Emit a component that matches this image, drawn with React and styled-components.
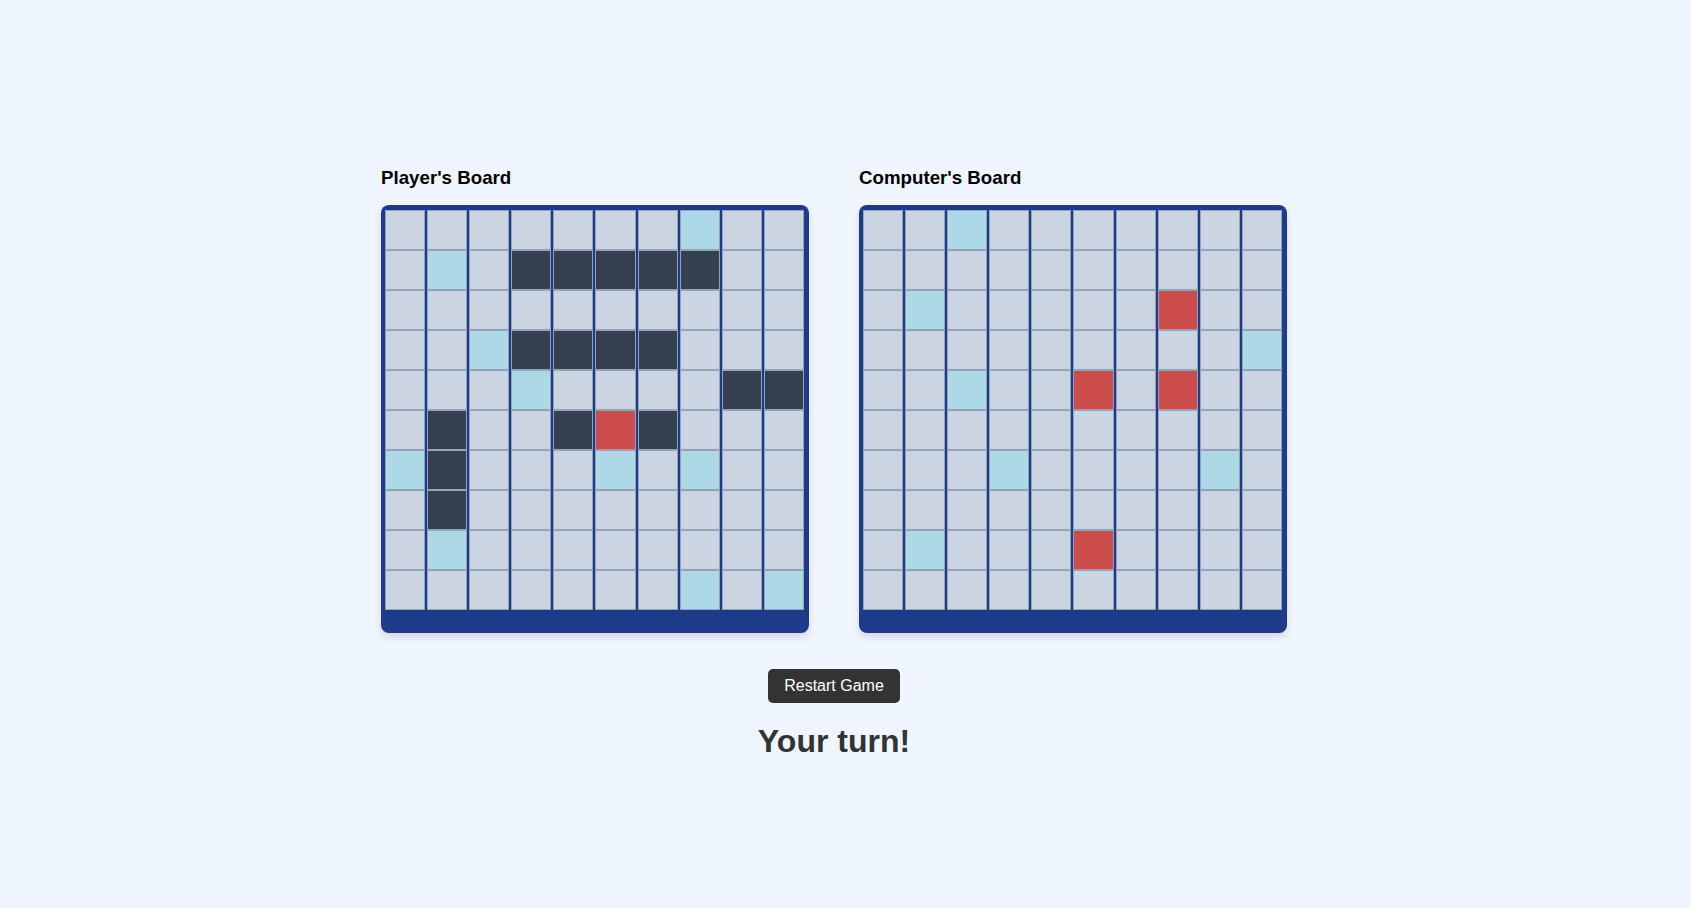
import React, { useState } from 'react';
import styled, { createGlobalStyle } from 'styled-components';

const GlobalStyle = createGlobalStyle`
  body {
    margin: 0;
    background-color: #eff6ff;
    font-family: "Liberation Sans", Arial, sans-serif;
  }
`;

const Page = styled.div`
  align-items: center;
  display: flex;
  flex-direction: column;
  min-height: 100vh;
  padding: 167px 23px 0 0;
  box-sizing: border-box;
`;

const Boards = styled.div`
  display: flex;
  gap: 50px;
`;

const BoardColumn = styled.div`
  display: flex;
  flex-direction: column;
`;

const Title = styled.h3`
  color: #000;
  font-size: 18.72px;
  font-weight: 700;
  line-height: 21px;
  margin: 0 0 17px;
`;

const Grid = styled.div`
  align-content: start;
  background-color: #1e3a8a;
  border-radius: 8px;
  box-shadow: 0 4px 8px rgba(0, 0, 0, 0.12);
  box-sizing: border-box;
  column-gap: 2px;
  display: grid;
  grid-auto-rows: 40px;
  grid-template-columns: repeat(10, 1fr);
  height: 428px;
  padding: 5px 5px 4px 4px;
  width: 428px;
`;

const fills = {
  empty: '#cbd5e1',
  ship: '#343f50',
  miss: '#add8e6',
  hit: '#cc4c4c'
};

const Cell = styled.div`
  background-color: ${({ $state }) => fills[$state]};
  border: 1px solid #94a3b8;
  box-sizing: border-box;
  cursor: ${({ $clickable }) => ($clickable ? 'pointer' : 'default')};
`;

const RestartButton = styled.button`
  background-color: #333;
  border: none;
  border-radius: 5px;
  color: #fff;
  cursor: pointer;
  font-family: "Liberation Sans", Arial, sans-serif;
  font-size: 16px;
  height: 34px;
  margin-top: 36px;
  padding: 0 16px;
`;

const Status = styled.h1`
  color: #333;
  font-size: 32px;
  font-weight: 700;
  margin: 20px 0 0;
`;

// rows of 10: . empty, S ship, o miss, X hit
const playerLayout = [
  '.......o..',
  '.o.SSSSS..',
  '..........',
  '..oSSSS...',
  '...o....SS',
  '.S..SXS...',
  'oS...o.o..',
  '.S........',
  '.o........',
  '.......o.o'
];

const computerLayout = [
  '..o.......',
  '..........',
  '.o.....X..',
  '.........o',
  '..o..X.X..',
  '..........',
  '...o....o.',
  '..........',
  '.o...X....',
  '..........'
];

const codes = { '.': 'empty', S: 'ship', o: 'miss', X: 'hit' };

const parse = (rows) => rows.map((row) => row.split('').map((c) => codes[c]));

const Board = ({ title, cells, onFire }) => <BoardColumn>
  <Title>{title}</Title>
  <Grid>
    {cells.map((row, r) => row.map((state, c) => <Cell
      key={`${r}-${c}`}
      $state={state}
      $clickable={!!onFire}
      onClick={onFire ? () => onFire(r, c) : undefined}
    />))}
  </Grid>
</BoardColumn>;

const App = () => {
  const [player, setPlayer] = useState(() => parse(playerLayout));
  const [computer, setComputer] = useState(() => parse(computerLayout));

  const fire = (r, c) => {
    if (computer[r][c] === 'hit' || computer[r][c] === 'miss') return;
    setComputer((prev) => prev.map((row, i) => row.map((s, j) => (i === r && j === c ? (s === 'ship' ? 'hit' : 'miss') : s))));
  };

  const restart = () => {
    setPlayer(parse(playerLayout));
    setComputer(parse(computerLayout));
  };

  return <Page>
    <GlobalStyle />
    <Boards>
      <Board title="Player's Board" cells={player} />
      <Board title="Computer's Board" cells={computer.map((row) => row.map((s) => (s === 'ship' ? 'empty' : s)))} onFire={fire} />
    </Boards>
    <RestartButton onClick={restart}>Restart Game</RestartButton>
    <Status>Your turn!</Status>
  </Page>;
};

export default App;
